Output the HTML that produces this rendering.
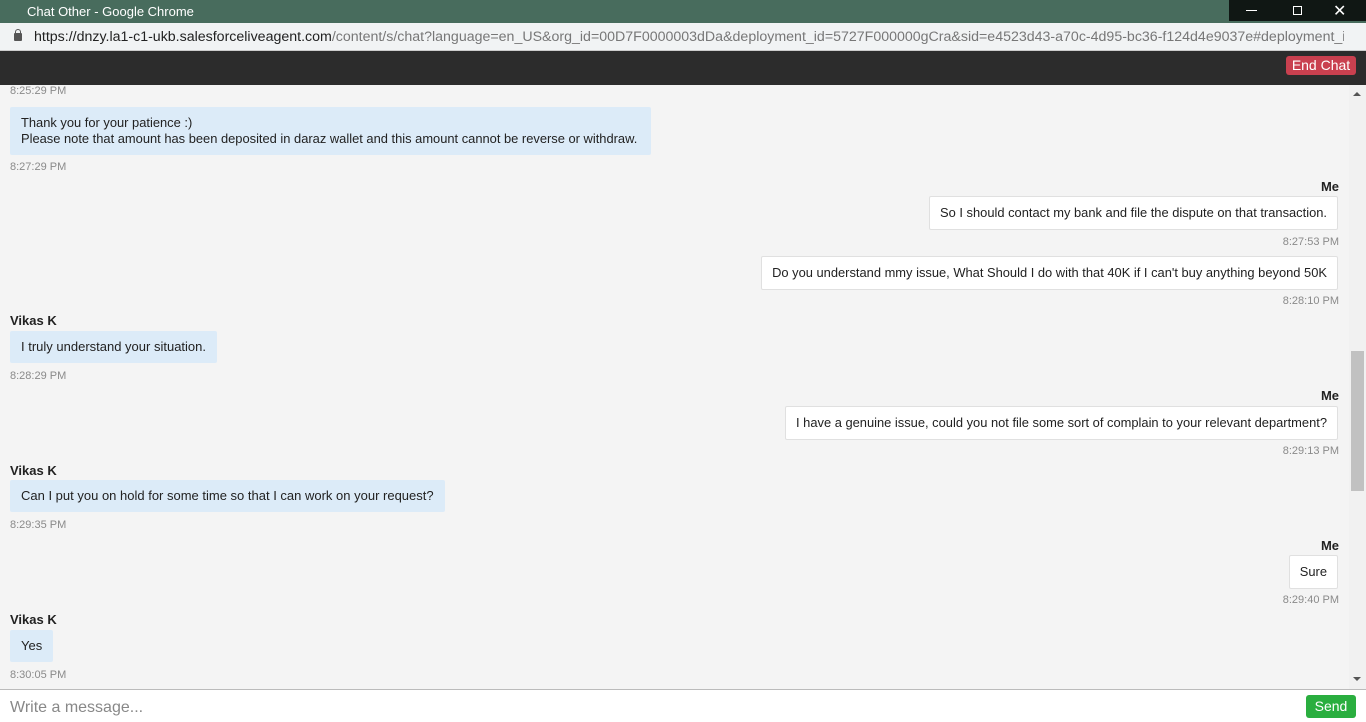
<!DOCTYPE html><html><head><style>
*{margin:0;padding:0;box-sizing:border-box}
body{width:1366px;height:722px;overflow:hidden;font-family:"Liberation Sans",Arial,sans-serif;background:#f4f4f4;position:relative}
.a{position:absolute}
.ts{position:absolute;font-size:11px;color:#8a8a8a}
.nm{position:absolute;font-size:13px;font-weight:bold;color:#222}
.ab{position:absolute;background:#dcebf8;font-size:13px;color:#222;padding:8px 11px;line-height:16px;border-radius:2px;white-space:nowrap}
.mb{position:absolute;background:#fff;border:1px solid #e0e0e0;font-size:12.9px;color:#222;padding:8px 10px;line-height:16px;border-radius:2px;right:28px;white-space:nowrap}
</style></head><body>
<div class="a" style="left:0;top:0;width:1366px;height:23px;background:#486c5d"></div>
<div class="a" style="left:27px;top:4px;color:#fff;font-size:13px">Chat Other - Google Chrome</div>
<div class="a" style="left:1229px;top:0;width:137px;height:21px;background:#101714"></div>
<div class="a" style="left:1246px;top:10px;width:11px;height:1px;background:#fff"></div>
<div class="a" style="left:1293px;top:6px;width:9px;height:9px;border:1px solid #fff"></div>
<div class="a" style="left:1333px;top:1px;color:#fff;font-size:16px">✕</div>
<div class="a" style="left:0;top:23px;width:1366px;height:28px;background:#f1f3f4;border-bottom:1px solid #ccc"></div>
<div class="a" style="left:14px;top:33px;width:8px;height:8px;background:#555;border-radius:1px"></div>
<div class="a" style="left:15px;top:29px;width:6px;height:6px;border:1.5px solid #555;border-bottom:0;border-radius:3px 3px 0 0"></div>
<div class="a" style="left:34px;top:29px;font-size:14.2px;color:#777;white-space:nowrap;width:1310px;overflow:hidden"><span style="color:#222">https://dnzy.la1-c1-ukb.salesforceliveagent.com</span>/content/s/chat?language=en_US&amp;org_id=00D7F0000003dDa&amp;deployment_id=5727F000000gCra&amp;sid=e4523d43-a70c-4d95-bc36-f124d4e9037e#deployment_id...</div>
<div class="a" style="left:0;top:51px;width:1366px;height:34px;background:#2c2c2c"></div>
<div class="a" style="left:1286px;top:56px;width:70px;height:19px;background:#c9404f;border-radius:3px;color:#fff;font-size:14px;text-align:center;line-height:19px">End Chat</div>
<div class="a" style="left:1349px;top:85px;width:17px;height:604px;background:#f1f1f1"></div>
<div class="a" style="left:1351px;top:351px;width:13px;height:140px;background:#c1c1c1"></div>
<div class="a" style="left:1353px;top:92px;border:4px solid transparent;border-bottom:4px solid #555;border-top:0"></div>
<div class="a" style="left:1353px;top:677px;border:4px solid transparent;border-top:4px solid #555;border-bottom:0"></div>

<div class="ts" style="left:10px;top:85px">8:25:29 PM</div>
<div class="ab" style="left:10px;top:107px;width:641px;font-size:12.9px">Thank you for your patience :)<br>Please note that amount has been deposited in daraz wallet and this amount cannot be reverse or withdraw.</div>
<div class="ts" style="left:10px;top:161px">8:27:29 PM</div>
<div class="nm" style="right:27px;top:179px">Me</div>
<div class="mb" style="top:196px">So I should contact my bank and file the dispute on that transaction.</div>
<div class="ts" style="right:27px;top:236px">8:27:53 PM</div>
<div class="mb" style="top:256px">Do you understand mmy issue, What Should I do with that 40K if I can't buy anything beyond 50K</div>
<div class="ts" style="right:27px;top:295px">8:28:10 PM</div>
<div class="nm" style="left:10px;top:313px">Vikas K</div>
<div class="ab" style="left:10px;top:331px">I truly understand your situation.</div>
<div class="ts" style="left:10px;top:370px">8:28:29 PM</div>
<div class="nm" style="right:27px;top:388px">Me</div>
<div class="mb" style="top:406px">I have a genuine issue, could you not file some sort of complain to your relevant department?</div>
<div class="ts" style="right:27px;top:445px">8:29:13 PM</div>
<div class="nm" style="left:10px;top:463px">Vikas K</div>
<div class="ab" style="left:10px;top:480px">Can I put you on hold for some time so that I can work on your request?</div>
<div class="ts" style="left:10px;top:519px">8:29:35 PM</div>
<div class="nm" style="right:27px;top:538px">Me</div>
<div class="mb" style="top:555px">Sure</div>
<div class="ts" style="right:27px;top:594px">8:29:40 PM</div>
<div class="nm" style="left:10px;top:612px">Vikas K</div>
<div class="ab" style="left:10px;top:630px">Yes</div>
<div class="ts" style="left:10px;top:669px">8:30:05 PM</div>

<div class="a" style="left:0;top:689px;width:1366px;height:33px;background:#fff;border-top:1px solid #bbb"></div>
<div class="a" style="left:10px;top:699px;font-size:16px;color:#888">Write a message...</div>
<div class="a" style="left:1306px;top:695px;width:50px;height:23px;background:#2aae3f;border-radius:3px;color:#fff;font-size:14px;text-align:center;line-height:23px">Send</div>
</body></html>
